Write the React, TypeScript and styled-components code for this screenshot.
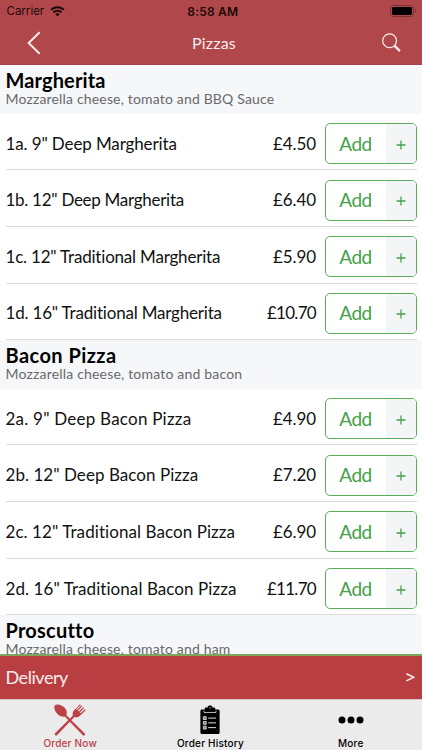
import React from "react";
import styled, { createGlobalStyle } from "styled-components";

const GlobalStyle = createGlobalStyle`
  *, *::before, *::after { box-sizing: border-box; }
  body { margin: 0; background: #fff; }
  button { font: inherit; color: inherit; background: none; border: 0; padding: 0; margin: 0; }
`;

const Screen = styled.div`
  display: flex;
  flex-direction: column;
  width: 422px;
  height: 750px;
  overflow: hidden;
  background: #fff;
  color: #111;
  font-family: Lato, "Open Sans", sans-serif;
`;

const Header = styled.header`
  flex: none;
  height: 65.3px;
  background: #b0484b;
  border-bottom: 1px solid #a74347;
`;

const StatusBar = styled.div`
  display: grid;
  grid-template-columns: 1fr auto 1fr;
  align-items: center;
  height: 22px;
  padding: 0 5px 0 6.5px;
  font: 400 11.5px Inter, sans-serif;
  color: #1c0809;
`;

const Carrier = styled.span`
  display: flex;
  align-items: center;
  gap: 6px;
`;

const Clock = styled.span`
  padding-left: 2px;
  font-weight: 600;
  font-size: 12px;
  letter-spacing: 0.2px;
`;

const BatterySlot = styled.span`
  display: flex;
  justify-content: flex-end;
`;

const NavBar = styled.nav`
  display: grid;
  grid-template-columns: 60px 1fr 60px;
  align-items: center;
  height: 42px;
  padding: 0 1px 0 4px;
  color: #fbeeee;
`;

const NavTitle = styled.h1`
  margin: 0;
  padding: 0 0 2px 3px;
  text-align: center;
  font-size: 16px;
  font-weight: 400;
  letter-spacing: 0.2px;
`;

const NavButton = styled.button`
  display: flex;
  justify-content: center;
  align-items: center;
  height: 42px;
`;

const Menu = styled.main`
  flex: 1;
  min-height: 0;
  overflow: hidden;
`;

const SectionHead = styled.div`
  height: 48.4px;
  padding: 4px 5.5px 0;
  background: #f6f7f9;
`;

const SectionTitle = styled.h2<{ $track: number }>`
  margin: 0;
  font-size: 20px;
  line-height: 22px;
  font-weight: 700;
  color: #000;
  letter-spacing: ${(p) => p.$track}px;
`;

const SectionNote = styled.p<{ $track: number }>`
  margin: 0;
  font-size: 14px;
  line-height: 16px;
  color: #68696b;
  letter-spacing: ${(p) => p.$track}px;
`;

const Item = styled.div`
  display: flex;
  align-items: center;
  height: 56.67px;
  margin: 0 5.5px;
  padding-top: 4px;
  border-bottom: 1px solid #dcdcde;
`;

const ItemName = styled.span<{ $track: number }>`
  flex: 1;
  padding-bottom: 1px;
  font-size: 17px;
  white-space: nowrap;
  letter-spacing: ${(p) => p.$track}px;
`;

const Price = styled.span<{ $track: number }>`
  padding-bottom: 1px;
  font-size: 17px;
  margin-right: 8.5px;
  letter-spacing: ${(p) => p.$track}px;
`;

const AddButton = styled.button`
  display: flex;
  width: 92px;
  height: 41px;
  border: 1px solid #5aad5a;
  border-radius: 5px;
  overflow: hidden;
  color: #45a049;
`;

const AddLabel = styled.span`
  flex: 1;
  align-self: center;
  padding-bottom: 1px;
  text-align: center;
  font-size: 19px;
  letter-spacing: -0.4px;
`;

const AddPlus = styled.span`
  display: flex;
  align-items: center;
  justify-content: center;
  width: 30px;
  padding: 2px 0 0 1px;
  align-self: stretch;
  background: #f4f5f7;
`;

const DeliveryBar = styled.button`
  flex: none;
  display: flex;
  justify-content: space-between;
  align-items: center;
  height: 45px;
  padding: 0 7px 0 5.5px;
  border-top: 2px solid #7ba65c;
  background: #b93e42;
  color: #fbeeee;
  font-size: 18px;
  letter-spacing: -0.45px;
`;

const DeliveryLabel = styled.span`
  padding-bottom: 1px;
`;

const TabBar = styled.footer`
  flex: none;
  display: grid;
  grid-template-columns: repeat(3, 1fr);
  height: 51.5px;
  padding-right: 1px;
  border-top: 1px solid #d9c3c4;
  background: #ebebeb;
`;

const Tab = styled.button<{ $active?: boolean }>`
  display: flex;
  flex-direction: column;
  align-items: center;
  padding-top: 3px;
  font: 500 10px/12px Inter, sans-serif;
  letter-spacing: 0.2px;
  color: ${(p) => (p.$active ? "#bd4146" : "#000")};
`;

const TabIcon = styled.span`
  display: flex;
  align-items: center;
  justify-content: center;
  height: 34px;
`;

const sections = [
  {
    title: "Margherita",
    track: 0.12,
    note: "Mozzarella cheese, tomato and BBQ Sauce",
    noteTrack: 0.17,
    items: [
      { name: '1a. 9" Deep Margherita', track: -0.12, price: "£4.50" },
      { name: '1b. 12" Deep Margherita', track: -0.28, price: "£6.40" },
      { name: '1c. 12" Traditional Margherita', track: -0.2, price: "£5.90" },
      { name: '1d. 16" Traditional Margherita', track: -0.19, price: "£10.70" },
    ],
  },
  {
    title: "Bacon Pizza",
    track: 0.44,
    note: "Mozzarella cheese, tomato and bacon",
    noteTrack: 0.19,
    items: [
      { name: '2a. 9" Deep Bacon Pizza', track: 0.23, price: "£4.90" },
      { name: '2b. 12" Deep Bacon Pizza', track: 0.05, price: "£7.20" },
      { name: '2c. 12" Traditional Bacon Pizza', track: 0.07, price: "£6.90" },
      { name: '2d. 16" Traditional Bacon Pizza', track: 0.07, price: "£11.70" },
    ],
  },
  {
    title: "Proscutto",
    track: 0.22,
    note: "Mozzarella cheese, tomato and ham",
    noteTrack: 0.17,
    items: [],
  },
];

const WifiIcon = () => (
  <svg width="15" height="11" viewBox="0 0 15 11" fill="currentColor">
    <path d="M7.5 0.2C4.7 0.2 2.2 1.3 0.4 3.1L1.8 4.6C3.3 3.1 5.3 2.2 7.5 2.2s4.2.9 5.7 2.4l1.4-1.5C12.8 1.3 10.3.2 7.5.2Z" />
    <path d="M7.5 3.8c-1.8 0-3.4.7-4.6 1.9l1.4 1.5c.8-.8 2-1.4 3.2-1.4s2.4.6 3.2 1.4l1.4-1.5C10.9 4.5 9.3 3.8 7.5 3.8Z" />
    <path d="M7.5 7.3c-.8 0-1.5.3-2.1.9l2.1 2.2 2.1-2.2c-.6-.6-1.3-.9-2.1-.9Z" />
  </svg>
);

const BatteryIcon = () => (
  <svg width="27" height="12" viewBox="0 0 27 12">
    <rect x="0.5" y="0.5" width="23" height="11" rx="2.8" fill="none" stroke="#7a3033" />
    <rect x="2" y="2" width="20" height="8" rx="1.4" fill="#000" />
    <path d="M25 4v4c.9-.3 1.4-1.1 1.4-2S25.9 4.3 25 4Z" fill="#7a3033" />
  </svg>
);

const BackIcon = () => (
  <svg width="14" height="24" viewBox="0 0 14 24" fill="none" stroke="currentColor" strokeWidth="1.9">
    <path d="M12.6 1.2 1.6 12l11 10.8" />
  </svg>
);

const SearchIcon = () => (
  <svg width="20" height="20" viewBox="0 0 20 20" fill="none" stroke="currentColor">
    <circle cx="8.6" cy="7.8" r="6.9" strokeWidth="1.2" />
    <path d="M13.4 12.6 18.9 18.1" strokeWidth="2.2" />
  </svg>
);

const PlusIcon = () => (
  <svg width="10" height="10" viewBox="0 0 10 10" stroke="currentColor" strokeWidth="1.3">
    <path d="M5 .5v9M.5 5h9" />
  </svg>
);

const CutleryIcon = () => (
  <svg width="32" height="32" viewBox="0.8 0.6 32.8 32.8" fill="currentColor">
    <path d="M1.7 1.8C4.2.1 9 1.3 11.8 4.5c2 2.300 2.600 5 1.700 7.400l3.700 4 15 14.800c.6.7.5 1.500 0 2-.6.5-1.400.4-2-.2L15.700 17.400l-3.800-4c-2.500.6-5.400-.2-7.500-2.600C1.600 8 .2 3.700 1.700 1.800Z" />
    <path d="M27.4.8 21.2 7.2c-1.400 1.600-1.700 3.500-1 5.300L2.100 30.400c-.7.7-.7 1.600-.1 2.200s1.500.5 2.100-.2L21.700 14c2 .7 3.900.3 5.500-1.100l6.200-6.100-.9-.9-4.600 4.200-.8-.8 4.500-4.500-.9-.9-4.500 4.500-.9-.8 4.500-4.600-.9-.9-4.500 4.500-.8-.8 4.600-4.200Z" />
  </svg>
);

const ClipboardIcon = () => (
  <svg width="20" height="30" viewBox="0 0 21 31">
    <path d="M2 4.500h3V3.700c0-.8.5-1.300 1.300-1.300h1.600C8.200.9 9.100.3 10.500.3s2.300.6 2.600 2.100h1.600c.8 0 1.300.5 1.300 1.300v.8h3c1 0 1.600.6 1.600 1.600v22.600c0 1-.6 1.600-1.600 1.600H2c-1 0-1.600-.6-1.600-1.600V6.100C.4 5.100 1 4.500 2 4.500Z" fill="#000" />
    <path d="M4.200 5.800v1.800h12.600v-1.800" fill="none" stroke="#ebebeb" strokeWidth=".8" />
    <circle cx="10.500" cy="2.700" r=".7" fill="#ebebeb" />
    <path d="M8.600 13.500h8.200M8.600 18.500h8.200M8.600 23.500h8.200" stroke="#ebebeb" strokeWidth="1" />
    <path d="M3.500 12h3v3h-3zM3.500 17h3v3h-3zM3.500 22h3v3h-3z" fill="#777" stroke="#ebebeb" strokeWidth=".9" />
  </svg>
);

const DotsIcon = () => (
  <svg width="26" height="8" viewBox="0 0 26 8">
    <circle cx="4" cy="4" r="3.500" />
    <circle cx="13" cy="4" r="3.500" />
    <circle cx="22" cy="4" r="3.500" />
  </svg>
);

const DeliveryArrow = () => (
  <svg width="9" height="10" viewBox="0 0 9 10" fill="none" stroke="currentColor" strokeWidth="1.500">
    <path d="M.4 1.700 7.900 5.300.4 8.900" />
  </svg>
);

export default function App() {
  return (
    <>
      <GlobalStyle />
      <Screen>
        <Header>
          <StatusBar>
            <Carrier>
              Carrier
              <WifiIcon />
            </Carrier>
            <Clock>8:58 AM</Clock>
            <BatterySlot>
              <BatteryIcon />
            </BatterySlot>
          </StatusBar>
          <NavBar>
            <NavButton aria-label="Back">
              <BackIcon />
            </NavButton>
            <NavTitle>Pizzas</NavTitle>
            <NavButton aria-label="Search">
              <SearchIcon />
            </NavButton>
          </NavBar>
        </Header>
        <Menu>
          {sections.map((section) => (
            <section key={section.title}>
              <SectionHead>
                <SectionTitle $track={section.track}>{section.title}</SectionTitle>
                <SectionNote $track={section.noteTrack}>{section.note}</SectionNote>
              </SectionHead>
              {section.items.map((item) => (
                <Item key={item.name}>
                  <ItemName $track={item.track}>{item.name}</ItemName>
                  <Price $track={item.price.length > 5 ? -0.7 : -0.1}>{item.price}</Price>
                  <AddButton>
                    <AddLabel>Add</AddLabel>
                    <AddPlus>
                      <PlusIcon />
                    </AddPlus>
                  </AddButton>
                </Item>
              ))}
            </section>
          ))}
        </Menu>
        <DeliveryBar>
          <DeliveryLabel>Delivery</DeliveryLabel>
          <DeliveryArrow />
        </DeliveryBar>
        <TabBar>
          <Tab $active>
            <TabIcon>
              <CutleryIcon />
            </TabIcon>
            Order Now
          </Tab>
          <Tab>
            <TabIcon>
              <ClipboardIcon />
            </TabIcon>
            Order History
          </Tab>
          <Tab>
            <TabIcon>
              <DotsIcon />
            </TabIcon>
            More
          </Tab>
        </TabBar>
      </Screen>
    </>
  );
}
